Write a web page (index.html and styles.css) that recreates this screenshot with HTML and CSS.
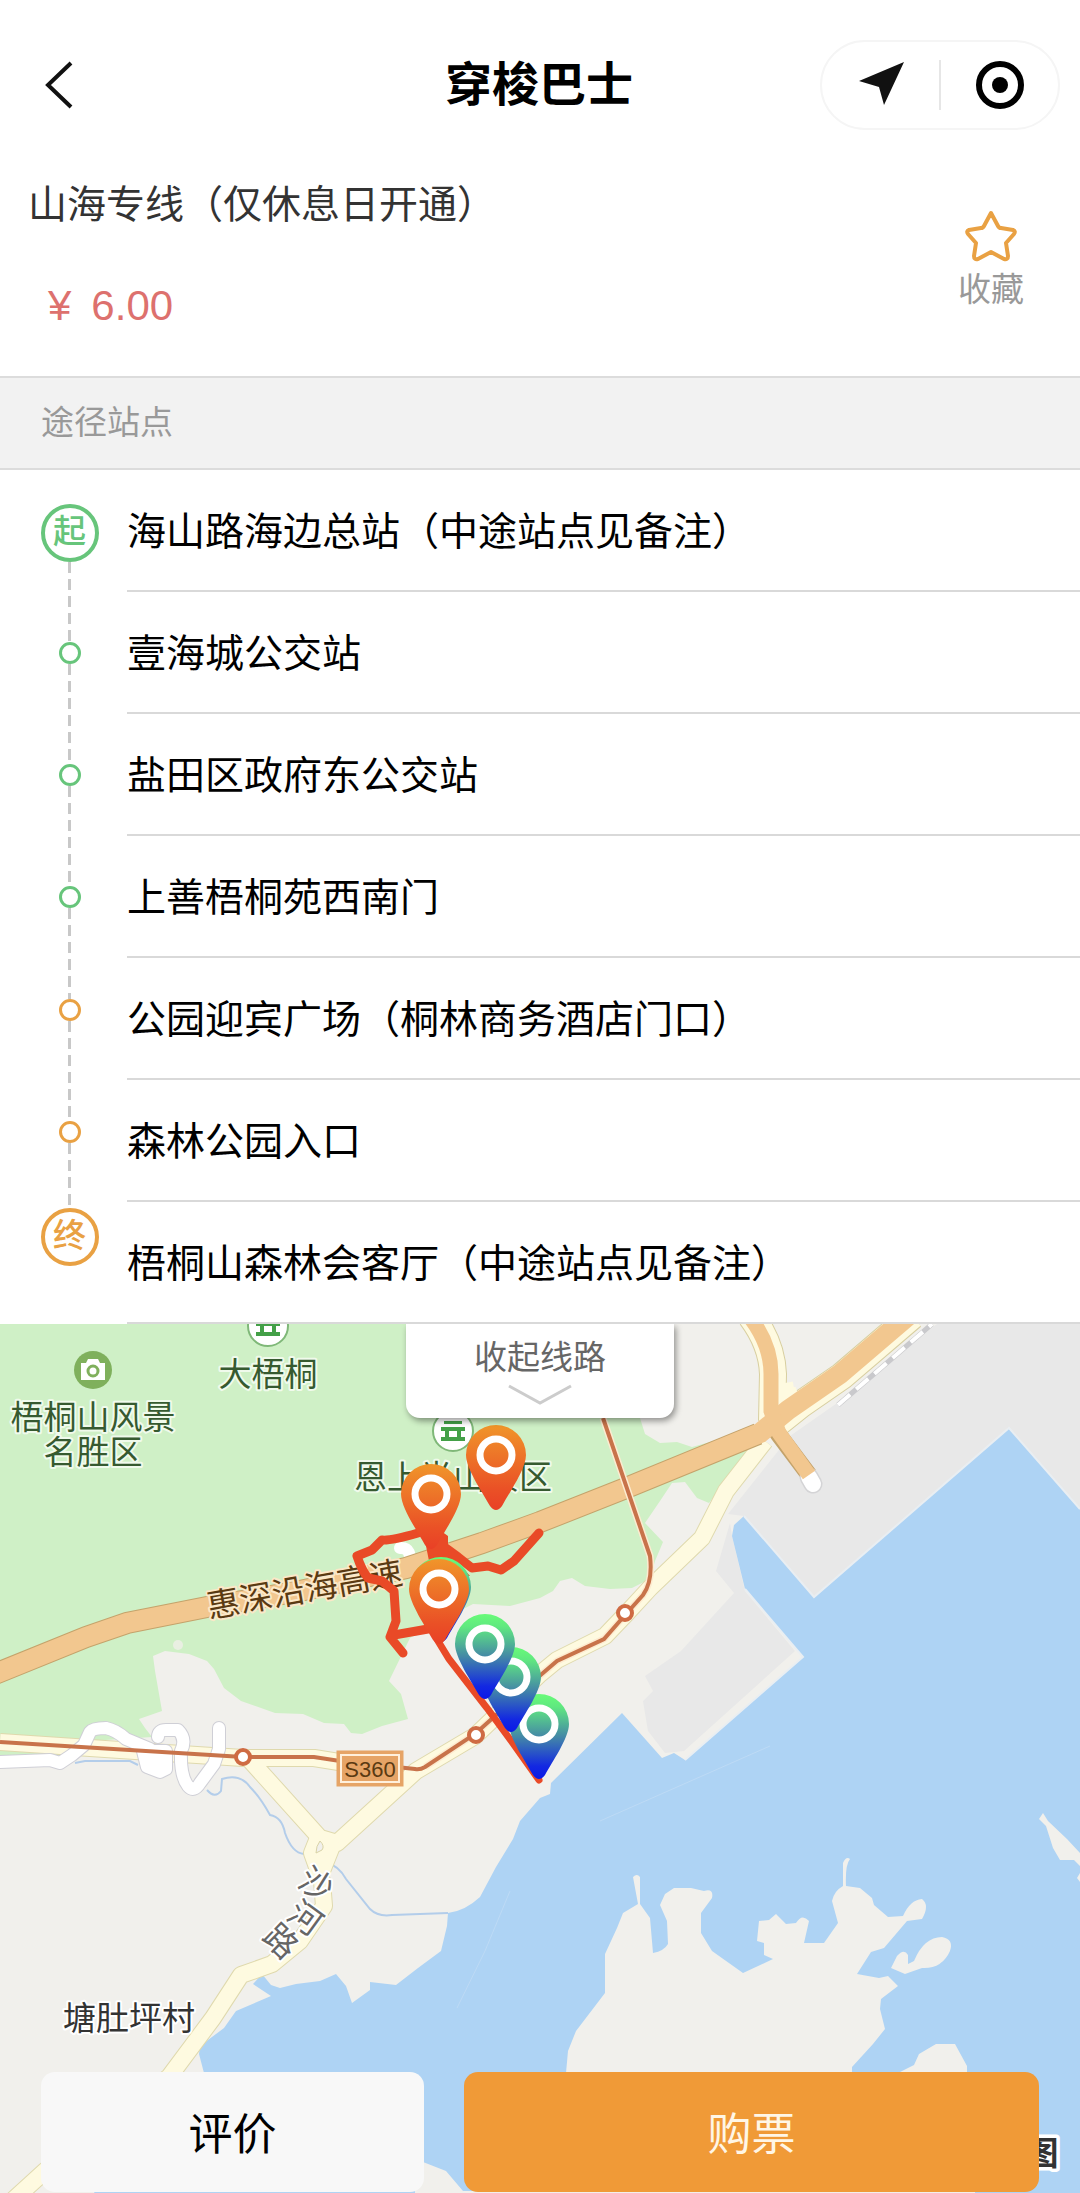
FILE: index.html
```html
<!DOCTYPE html>
<html lang="zh-CN">
<head>
  <meta charset="UTF-8" />
  <meta name="viewport" content="width=device-width, initial-scale=1" />
  <title>穿梭巴士</title>
  <link rel="stylesheet" href="styles.css">
</head>
<body>
  <header class="navbar">
    <button class="back-btn" aria-label="返回">
      <svg width="30" height="50" viewBox="0 0 30 50"><path d="M27 3 L4 25 L27 47" /></svg>
    </button>
    <h1>穿梭巴士</h1>
    <div class="capsule">
      <button aria-label="定位">
        <svg width="48" height="48" viewBox="0 0 48 48"><path d="M47 1 L2 20 L22 26 L27 44 Z" fill="#111" /></svg>
      </button>
      <button aria-label="关闭">
        <svg width="52" height="52" viewBox="0 0 52 52">
          <circle cx="26" cy="26" r="21" fill="none" stroke="#000" stroke-width="6" />
          <circle cx="26" cy="26" r="8" />
        </svg>
      </button>
    </div>
  </header>

  <section class="summary">
    <div class="line-info">
      <h2>山海专线（仅休息日开通）</h2>
      <p class="price"><span>¥</span><span>6.00</span></p>
    </div>
    <button class="favorite">
      <svg width="52" height="52" viewBox="0 0 52 52">
        <path d="M26 3 L33 16 Q34 18 36 18 L48 20 Q51 21 49 24 L41 33 L43 46 Q43 50 39 49 L26 42 L13 49 Q9 50 9 46 L11 33 L3 24 Q1 21 4 20 L16 18 Q18 18 19 16 Z" />
      </svg>
      收藏
    </button>
  </section>

  <h3 class="section-title">途径站点</h3>

  <section class="route">
    <div class="track">
      <span class="badge green">起</span>
      <i class="leg leg-start"></i>
      <i class="dot green"></i>
      <i class="leg"></i>
      <i class="dot green"></i>
      <i class="leg"></i>
      <i class="dot green"></i>
      <i class="leg leg-mid"></i>
      <i class="dot orange"></i>
      <i class="leg"></i>
      <i class="dot orange"></i>
      <i class="leg leg-end"></i>
      <span class="badge orange">终</span>
    </div>
    <ol class="stops">
      <li>海山路海边总站（中途站点见备注）</li>
      <li>壹海城公交站</li>
      <li>盐田区政府东公交站</li>
      <li>上善梧桐苑西南门</li>
      <li>公园迎宾广场（桐林商务酒店门口）</li>
      <li>森林公园入口</li>
      <li>梧桐山森林会客厅（中途站点见备注）</li>
    </ol>
  </section>

  <section class="map">
    <svg class="map-canvas" viewBox="0 1323 1080 870">
      <defs>
        <linearGradient id="orangeFill" x1="0" y1="0" x2="0" y2="1">
          <stop offset="0" stop-color="#f0952a" />
          <stop offset=".75" stop-color="#ea5126" />
          <stop offset="1" stop-color="#e94026" />
        </linearGradient>
        <linearGradient id="greenFill" x1="0" y1="0" x2="0" y2="1">
          <stop offset="0" stop-color="#68fb78" />
          <stop offset=".15" stop-color="#60e880" />
          <stop offset=".5" stop-color="#4489a6" />
          <stop offset=".85" stop-color="#1328e2" />
          <stop offset="1" stop-color="#0a18e8" />
        </linearGradient>
        <path id="pin" d="M-30 0 A30 30 0 0 1 30 0 C30 14 13 38 6 51 Q0 59 -6 51 C-13 38 -30 14 -30 0 Z" />
        <g id="temple">
          <circle r="20" fill="#fff" stroke="#7fb878" stroke-width="2" />
          <path d="M-9 -10 H9 V-7 H-9 Z M-12 -4 H12 V0 H-12 Z M-8 0 H-4 V6 H4 V0 H8 V6 H12 V10 H-12 V6 H-8 Z" fill="#43a047" />
        </g>
      </defs>

      <rect y="1323" width="1080" height="870" fill="#f1f0ec" />

      <!-- parks -->
      <path class="park" d="M0 1323 H640 V1417 L645 1433 L660 1442 L677 1441 L692 1446 L750 1430 L750 1448 L709 1502 L697 1497 L685 1481 L672 1482 L660 1500 L645 1522 L663 1541 L655 1560 L650 1578 L632 1587 L610 1588 L585 1585 L572 1577 L560 1580 L553 1590 L540 1597 L510 1605 L473 1603 L440 1620 L410 1637 L389 1680 L401 1693 L408 1718 L382 1725 L362 1733 L351 1732 L344 1723 L324 1722 L303 1713 L275 1712 L241 1700 L224 1687 L214 1668 L207 1660 L189 1653 L165 1650 L153 1655 L155 1670 L162 1710 L139 1718 L145 1727 L152 1736 L90 1740 L70 1756 L0 1754 Z" />
      <circle cx="178" cy="1644" r="5" fill="#e9efe2" />

      <!-- port -->
      <path class="port" d="M937 1323 H1080 V1508 L1009 1427 L814 1596 L744 1515 L728 1513 L790 1435 L840 1400 Z" />
      <path class="port" d="M730 1522 L716 1570 L734 1592 L681 1650 L645 1675 L653 1690 L643 1700 L648 1730 L665 1752 L684 1750 L795 1650 L745 1590 L732 1535 Z" />

      <!-- sea -->
      <path class="sea" d="M1080 1508 L1009 1427 L814 1596 L744 1515 L734 1524 L732 1535 L745 1588 L803 1656 L685 1759 L674 1752 L662 1757 L622 1712 L551 1782 L550 1793 L540 1797 L520 1820 L513 1838 L496 1866 L480 1896 Q465 1910 448 1912 L447 1925 L441 1950 L418 1967 L396 1984 L370 1981 V1989 L352 2002 L346 1985 L336 1973 L320 1980 L296 1983 L280 1987 L271 1984 L262 1973 L253 1983 L271 1995 L236 2010 L224 2027 L200 2045 L199 2053 L204 2072 L215 2110 L130 2150 L93 2193 H1080 Z" />
      <path class="coast" d="M1080 1508 L1009 1427 L814 1596 L744 1515 M745 1588 L803 1656 L685 1759" />

      <!-- peninsula and islands -->
      <path class="land" d="M560 2110 L566 2072 L568 2050 L576 2030 L605 1992 V1953 L617 1927 L623 1912 L638 1903 L633 1876 Q637 1872 640 1876 L640 1903 L650 1917 L653 1952 Q664 1950 668 1943 L667 1920 L660 1904 L665 1893 L674 1887 H691 L704 1890 Q714 1887 712 1897 L701 1912 V1932 L712 1950 L743 1972 L773 1958 L764 1954 V1942 L757 1940 L759 1920 L769 1919 L776 1913 L786 1923 L796 1922 Q802 1912 809 1920 L804 1942 H824 L838 1922 L832 1900 Q834 1890 843 1885 V1862 Q846 1855 850 1858 Q845 1864 846 1885 L860 1887 L872 1897 L874 1904 L888 1916 L903 1915 Q910 1899 922 1898 Q930 1904 922 1918 L907 1920 L884 1947 L871 1951 L857 1973 L879 1977 L888 1975 L898 1985 L881 1998 L880 2008 L885 2028 L873 2043 L852 2066 L852 2110 Z" />
      <path class="land" d="M891 1967 L897 1955 Q904 1947 908 1954 L908 1963 L914 1960 Q924 1936 942 1936 Q954 1938 950 1950 Q942 1968 922 1967 L905 1973 Z" />
      <path class="land" d="M890 2080 L898 2072 L914 2064 L919 2053 L936 2043 H955 L967 2065 V2080 Z" />
      <path class="land" d="M1043 1812 L1048 1820 L1067 1838 L1080 1852 V1865 L1074 1859 L1060 1859 L1053 1847 L1046 1825 L1039 1818 Z M1080 1872 L1077 1877 L1080 1881 Z" />
      <path class="land" d="M415 2193 V2160 L423 2161 L446 2170 L463 2190 L720 2191 H975 V2193 Z" />
      <path class="ferry" d="M457 2007 L485 1950 L510 1890 M600 1820 L770 1745" />

      <!-- rivers -->
      <path class="river" d="M75 1762 L85 1760 H130 L138 1764 M207 1789 Q215 1798 221 1790 L222 1778 Q240 1772 250 1786 Q260 1796 270 1814 Q282 1816 285 1832 Q292 1852 304 1853 M328 1863 Q338 1864 346 1878 L370 1908 Q378 1916 392 1914 L448 1912" />

      <!-- county roads -->
      <g class="road-yellow-edge">
        <path d="M0 1741 L120 1749 L243 1757 L314 1757 L345 1762" />
        <path d="M248 1757 L320 1837 L337 1842 L416 1770 L475 1735 L540 1673 L557 1659 L605 1635 L626 1613 L650 1587 L702 1537 L726 1490 L765 1440" />
        <path d="M318 1837 L312 1852 L322 1880 L324 1905 L300 1940 L272 1963 L241 1974 L213 2017 L169 2076 L45 2170 L12 2200 M334 1840 L322 1870" />
      </g>
      <g class="road-yellow">
        <path d="M0 1741 L120 1749 L243 1757 L314 1757 L345 1762" />
        <path d="M248 1757 L320 1837 L337 1842 L416 1770 L475 1735 L540 1673 L557 1659 L605 1635 L626 1613 L650 1587 L702 1537 L726 1490 L765 1440" />
        <path d="M318 1837 L312 1852 L322 1880 L324 1905 L300 1940 L272 1963 L241 1974 L213 2017 L169 2076 L45 2170 L12 2200 M334 1840 L322 1870" />
      </g>
      <path d="M320 1840 Q325 1845 322 1849 L316 1852 Q316 1845 320 1840 Z" fill="#f1f0ec" stroke="#d9d3a6" />

      <!-- yard -->
      <g class="yard-edge">
        <path d="M0 1761 L50 1759 L60 1762 L72 1754 L84 1744 L90 1731 Q93 1727 106 1727 Q116 1729 126 1738 L150 1748" />
        <path d="M158 1736 Q158 1729 166 1729 L178 1729 Q187 1738 181 1750 Q180 1775 188 1785 Q194 1792 200 1782 L214 1763 L219 1748 V1727" />
        <path d="M143 1750 H166 V1768 L160 1771 L147 1766 Z" />
      </g>
      <g class="yard">
        <path d="M0 1761 L50 1759 L60 1762 L72 1754 L84 1744 L90 1731 Q93 1727 106 1727 Q116 1729 126 1738 L150 1748" />
        <path d="M158 1736 Q158 1729 166 1729 L178 1729 Q187 1738 181 1750 Q180 1775 188 1785 Q194 1792 200 1782 L214 1763 L219 1748 V1727" />
        <path d="M143 1750 H166 V1768 L160 1771 L147 1766 Z" fill="#fff" />
        <path d="M400 1547 Q413 1546 409 1566" />
      </g>

      <!-- expressway -->
      <path class="road-orange-edge" d="M-5 1673 L86 1636 L127 1622 L207 1606 L300 1590 L406 1567 L482 1542 L540 1521 L626 1487 L758 1433" />
      <g class="shoulder-edge">
        <path d="M751 1315 Q772 1343 773 1373 L772 1420" />
        <path d="M775 1424 L800 1404 L842 1375 L912 1315" />
      </g>
      <g class="shoulder">
        <path d="M751 1315 Q772 1343 773 1373 L772 1420" />
        <path d="M775 1424 L800 1404 L842 1375 L912 1315" />
        <path d="M780 1383 L784 1404 L800 1398" />
      </g>
      <path class="ramp-edge" d="M772 1424 L779 1434 L809 1474" />
      <path class="road-orange" d="M-5 1673 L86 1636 L127 1622 L207 1606 L300 1590 L406 1567 L482 1542 L540 1521 L626 1487 L760 1432 L788 1409 L840 1373 L908 1315" />
      <path d="M809 1476 L813 1483" stroke="#d4d4d6" stroke-width="19" stroke-linecap="round" />
      <path d="M809 1476 L813 1483" stroke="#fff" stroke-width="16" stroke-linecap="round" />
      <path class="ramp" d="M749 1315 Q771 1343 771 1373 V1410 L779 1432 L809 1474" />

      <!-- railway -->
      <path d="M838 1404 L932 1323" stroke="#c9c9cc" stroke-width="5" />
      <path d="M838 1404 L932 1323" stroke="#fff" stroke-width="4" stroke-dasharray="16 8" />

      <!-- metro -->
      <path class="metro-halo" d="M603 1417 L650 1555 Q653 1580 643 1594 L626 1613 L604 1638 L557 1660 L536 1678 L475 1733 L425 1766" />
      <path class="metro" d="M603 1417 L650 1555 Q653 1580 643 1594 L626 1613 L604 1638 L557 1660 L536 1678 L475 1733 L425 1766 Q420 1769 415 1768 L340 1760 L314 1756 L243 1756 L0 1741" />
      <g fill="#fff" stroke="#cf6b43" stroke-width="4">
        <circle cx="243" cy="1756" r="7" />
        <circle cx="476" cy="1734" r="7" />
        <circle cx="625" cy="1612" r="7" />
      </g>

      <g>
        <rect x="338" y="1751" width="64" height="33" fill="#e6a466" stroke="#e6a466" stroke-width="3" />
        <rect x="341" y="1754" width="58" height="27" fill="none" stroke="#fff0dc" stroke-width="2" />
        <text class="shield" x="370" y="1776">S360</text>
      </g>

      <!-- points of interest -->
      <use href="#temple" x="268" y="1325" />
      <use href="#temple" x="453" y="1430" />
      <circle cx="93" cy="1369" r="19" fill="#7fb05c" />
      <path d="M81 1362 H86 L88 1358 H98 L100 1362 H105 V1379 H81 Z" fill="#fff" />
      <circle cx="93" cy="1370" r="5" fill="#fff" stroke="#7fb05c" stroke-width="3" />

      <g class="label label-park">
        <text x="93" y="1428">梧桐山风景</text>
        <text x="93" y="1463">名胜区</text>
        <text x="268" y="1385">大梧桐</text>
        <text x="453" y="1488">恩上半山景区</text>
      </g>
      <text class="label label-highway" x="307" y="1600" transform="rotate(-10 307 1601)">惠深沿海高速</text>
      <g class="label label-road">
        <text x="317" y="1895" transform="rotate(32 317 1882)">沙</text>
        <text x="306" y="1929" transform="rotate(36 306 1916)">河</text>
        <text x="281" y="1952" transform="rotate(44 281 1940)">路</text>
      </g>
      <text class="label label-place" x="129" y="2029">塘肚坪村</text>
      <text class="label label-brand" x="1042" y="2164">图</text>

      <!-- line shape -->
      <path class="trace" d="M418 1532 Q390 1540 382 1539 L372 1549 L357 1555 Q362 1570 368 1577 L382 1580 L394 1590 L396 1620 L390 1636 L403 1652 M394 1634 L428 1628 M436 1540 L458 1556 L472 1567 L488 1565 L501 1569 L514 1560 L539 1532" />
      <path d="M420 1515 L448 1535 V1550 L470 1575 H432 L426 1545 Z" fill="#e94a27" />
      <path class="trace-thin" d="M438 1640 L449 1658 L487 1707 L512 1741 L539 1779" />

      <use href="#pin" x="539" y="1723" fill="url(#greenFill)" />
      <circle class="pin-hole" cx="539" cy="1723" r="16" />
      <use href="#pin" x="511" y="1676" fill="url(#greenFill)" />
      <circle class="pin-hole" cx="511" cy="1676" r="16" />
      <use href="#pin" x="485" y="1643" fill="url(#greenFill)" />
      <circle class="pin-hole" cx="485" cy="1643" r="16" />
      <use href="#pin" x="431" y="1493" fill="url(#orangeFill)" />
      <circle class="pin-hole" cx="431" cy="1493" r="16" />
      <use href="#pin" x="496" y="1454" fill="url(#orangeFill)" />
      <circle class="pin-hole" cx="496" cy="1454" r="16" />
      <use href="#pin" x="441" y="1586" fill="url(#greenFill)" />
      <use href="#pin" x="439" y="1588" fill="url(#orangeFill)" />
      <circle class="pin-hole" cx="439" cy="1588" r="16" />
    </svg>

    <button class="collapse-btn">
      收起线路
      <svg width="66" height="22" viewBox="0 0 66 22"><path d="M2 2 L33 19 L64 2" /></svg>
    </button>

    <div class="actions">
      <button class="review-btn">评价</button>
      <button class="buy-btn">购票</button>
    </div>
  </section>
</body>
</html>
```
FILE: styles.css
```css
* {
  box-sizing: border-box;
}
body {
  margin: 0;
  font-family: 'Liberation Sans', 'Noto Sans CJK SC', sans-serif;
  background: #fff;
  color: #000;
}
h1, h2, h3, p, ol {
  margin: 0;
  padding: 0;
  font-weight: normal;
}
button {
  border: none;
  padding: 0;
  background: none;
  font-family: inherit;
  color: inherit;
  cursor: pointer;
}
svg {
  display: block;
}

/* navbar */
.navbar {
  display: grid;
  grid-template-columns: 1fr auto 1fr;
  align-items: center;
  height: 172px;
  padding: 0 20px 2px 44px;
}
.navbar h1 {
  font-size: 47px;
  line-height: 60px;
  font-weight: bold;
  margin-right: 26px;
}
.back-btn {
  justify-self: start;
}
.back-btn path {
  fill: none;
  stroke: #111;
  stroke-width: 4;
}
.capsule {
  justify-self: end;
  display: flex;
  width: 240px;
  height: 90px;
  border: 2px solid #f5f5f5;
  border-radius: 45px;
}
.capsule button {
  flex: 1;
  display: flex;
  align-items: center;
  justify-content: center;
  margin: 18px 0;
}
.capsule button + button {
  border-left: 2px solid #e6e6e6;
}

/* summary */
.summary {
  display: flex;
  justify-content: space-between;
  height: 204px;
  padding: 8px 56px 0 28px;
}
.summary h2 {
  font-size: 39px;
  line-height: 50px;
  color: #333;
}
.price {
  display: flex;
  gap: 20px;
  margin: 52px 0 0 20px;
  font-size: 42px;
  line-height: 48px;
  color: #dd716e;
}
.favorite {
  display: flex;
  flex-direction: column;
  align-items: center;
  gap: 8px;
  align-self: flex-start;
  margin-top: 30px;
  font-size: 33px;
  line-height: 40px;
  color: #999;
}
.favorite path {
  fill: none;
  stroke: #e9a143;
  stroke-width: 4;
  stroke-linejoin: round;
}
.section-title {
  height: 94px;
  padding-left: 41px;
  border-top: 2px solid #dcdcdc;
  border-bottom: 2px solid #dcdcdc;
  background: #f2f2f2;
  font-size: 33px;
  line-height: 90px;
  color: #999;
}

/* stops */
.route {
  display: flex;
}
.track {
  display: flex;
  flex-direction: column;
  align-items: center;
  width: 127px;
  padding: 34px 0 0 12px;
}
.badge {
  width: 58px;
  height: 58px;
  border: 4px solid;
  border-radius: 50%;
  font-size: 33px;
  line-height: 48px;
  font-weight: 500;
  text-align: center;
}
.dot {
  width: 22px;
  height: 22px;
  border: 3px solid;
  border-radius: 50%;
}
.green {
  color: #67c57b;
}
.orange {
  color: #e9a143;
}
.leg {
  width: 3px;
  height: 100px;
  background: repeating-linear-gradient(#c8c8c8 0 11px, transparent 11px 17px);
}
.leg-start {
  height: 80px;
}
.leg-mid {
  height: 91px;
}
.leg-end {
  height: 65px;
}
.stops {
  flex: 1;
  list-style: none;
}
.stops li {
  height: 122px;
  border-bottom: 2px solid #d9d9d9;
  font-size: 39px;
  line-height: 124px;
}

/* map */
.map {
  position: relative;
}
.map-canvas {
  width: 100%;
  height: auto;
}
.park {
  fill: #cff0c6;
}
.port {
  fill: #e8e8e8;
}
.sea {
  fill: #aed3f4;
}
.land {
  fill: #f1f0ec;
}
.coast {
  fill: none;
  stroke: #e9eef2;
  stroke-width: 2;
}
.ferry {
  fill: none;
  stroke: #bddaf5;
  stroke-width: 1;
}
.river {
  fill: none;
  stroke: #b3cdea;
  stroke-width: 2;
}
.road-yellow-edge {
  fill: none;
  stroke: #dfd9ad;
  stroke-width: 18;
  stroke-linejoin: round;
}
.road-yellow {
  fill: none;
  stroke: #fefae0;
  stroke-width: 16;
  stroke-linejoin: round;
}
.yard-edge {
  fill: none;
  stroke: #cfcfd6;
  stroke-width: 14;
  stroke-linecap: round;
  stroke-linejoin: round;
}
.yard {
  fill: none;
  stroke: #fff;
  stroke-width: 12;
  stroke-linecap: round;
  stroke-linejoin: round;
}
.road-orange-edge {
  fill: none;
  stroke: #c4a36b;
  stroke-width: 22;
}
.road-orange {
  fill: none;
  stroke: #f2c78f;
  stroke-width: 20;
}
.shoulder-edge {
  fill: none;
  stroke: #d8cfa0;
  stroke-width: 28;
}
.shoulder {
  fill: none;
  stroke: #fefae0;
  stroke-width: 26;
}
.ramp-edge {
  fill: none;
  stroke: #c4a36b;
  stroke-width: 17;
}
.ramp {
  fill: none;
  stroke: #f2c78f;
  stroke-width: 15;
}
.metro-halo {
  fill: none;
  stroke: #fdebd0;
  stroke-width: 7;
}
.metro {
  fill: none;
  stroke: #c8734a;
  stroke-width: 4;
}
.shield {
  font-size: 22px;
  text-anchor: middle;
  fill: #5a3a12;
}
.label {
  font-size: 33px;
  text-anchor: middle;
  paint-order: stroke;
  stroke: #fff;
  stroke-width: 4;
  stroke-linejoin: round;
}
.label-park {
  fill: #365a30;
  stroke: #f0faec;
}
.label-highway {
  fill: #5a3a12;
  stroke: #fbe8c8;
}
.label-road {
  fill: #666;
}
.label-place {
  fill: #333;
}
.label-brand {
  fill: #333;
  font-weight: bold;
  stroke-width: 7;
}
.trace {
  fill: none;
  stroke: #e94a27;
  stroke-width: 9;
  stroke-linecap: round;
  stroke-linejoin: round;
}
.trace-thin {
  fill: none;
  stroke: #e94a27;
  stroke-width: 7;
  stroke-linecap: round;
}
.pin-hole {
  fill: none;
  stroke: #fff;
  stroke-width: 7;
}
.collapse-btn {
  position: absolute;
  top: 0;
  left: 50%;
  transform: translateX(-50%);
  display: flex;
  flex-direction: column;
  align-items: center;
  width: 268px;
  height: 94px;
  padding-top: 8px;
  border-radius: 0 0 14px 14px;
  background: #fff;
  box-shadow: 2px 3px 6px rgba(0, 0, 0, 0.4);
  clip-path: inset(0 -12px -12px -12px);
  font-size: 33px;
  line-height: 52px;
  color: #666;
}
.collapse-btn path {
  fill: none;
  stroke: #ccc;
  stroke-width: 3;
}
.actions {
  position: absolute;
  left: 0;
  right: 0;
  bottom: 2px;
  display: flex;
  gap: 40px;
  padding: 0 41px;
}
.actions button {
  height: 120px;
  padding-bottom: 2px;
  border-radius: 14px;
  font-size: 44px;
}
.actions .review-btn {
  flex: 2;
  background: #f8f8f8;
}
.actions .buy-btn {
  flex: 3;
  background: #f09a37;
  color: #fff6e6;
}
```
